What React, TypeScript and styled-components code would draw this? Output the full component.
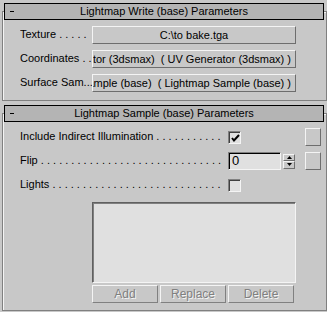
import styled, { createGlobalStyle } from "styled-components";

const GlobalStyle = createGlobalStyle`
  html, body {
    margin: 0;
    padding: 0;
    background: #c8c8c8;
  }
  body {
    font-family: "Liberation Sans", Arial, sans-serif;
    font-size: 11px;
    color: #000;
  }
`;

const dots = (n: number) => " .".repeat(n);

function App() {
  return (
    <>
      <GlobalStyle />
      <Page>
        <Rollout>
          <Header>
            <Dash />
            <Title>Lightmap Write (base) Parameters</Title>
          </Header>
          <Frame $pad="14px 0 8px 17px">
            <WriteGrid>
              <Label>
                <span>Texture</span>
                <Leader>{dots(5)}</Leader>
              </Label>
              <PushButton>
                <ButtonText>C:\to bake.tga</ButtonText>
              </PushButton>
              <Label>
                <span>Coordinates</span>
                <Leader>{dots(2)}</Leader>
              </Label>
              <PushButton>
                <ButtonText $clip>UV Generator (3dsmax)  ( UV Generator (3dsmax) )</ButtonText>
              </PushButton>
              <Label>
                <span>Surface Sam...</span>
              </Label>
              <PushButton>
                <ButtonText $clip>Lightmap Sample (base)  ( Lightmap Sample (base) )</ButtonText>
              </PushButton>
            </WriteGrid>
          </Frame>
        </Rollout>

        <Rollout $gap={4}>
          <Header>
            <Dash />
            <Title>Lightmap Sample (base) Parameters</Title>
          </Header>
          <Frame $pad="14px 0 7px 17px">
            <SampleGrid>
              <Label>
                <span>Include Indirect Illumination</span>
                <Leader>{dots(11)}</Leader>
              </Label>
              <Check>
                <svg width="9" height="8" viewBox="0 0 9 8">
                  <path d="M1 4 L3 6.5 L8 1" fill="none" stroke="#000" strokeWidth="2" />
                </svg>
              </Check>
              <SideButton />

              <Label>
                <span>Flip</span>
                <Leader>{dots(30)}</Leader>
              </Label>
              <SpinnerWrap>
                <Edit>0</Edit>
                <Spinner>
                  <SpinHalf>
                    <svg width="5" height="3" viewBox="0 0 5 3">
                      <path d="M2.5 0 L5 3 L0 3 Z" fill="#000" />
                    </svg>
                  </SpinHalf>
                  <SpinHalf>
                    <svg width="5" height="3" viewBox="0 0 5 3">
                      <path d="M0 0 L5 0 L2.5 3 Z" fill="#000" />
                    </svg>
                  </SpinHalf>
                </Spinner>
              </SpinnerWrap>
              <SideButton />

              <Label>
                <span>Lights</span>
                <Leader>{dots(28)}</Leader>
              </Label>
              <Check />
              <span />
            </SampleGrid>

            <ListArea>
              <ListBox />
              <ListButtons>
                <DisabledButton>Add</DisabledButton>
                <DisabledButton>Replace</DisabledButton>
                <DisabledButton>Delete</DisabledButton>
              </ListButtons>
            </ListArea>
          </Frame>
        </Rollout>
      </Page>
    </>
  );
}

export default App;

const Page = styled.div`
  box-sizing: border-box;
  width: 327px;
  height: 312px;
  overflow: hidden;
  padding: 3px 0 0 2px;
  display: flex;
  flex-direction: column;
`;

const Rollout = styled.section<{ $gap?: number }>`
  display: flex;
  flex-direction: column;
  width: 325px;
  margin-top: ${({ $gap }) => $gap ?? 0}px;
`;

const Header = styled.div`
  position: relative;
  z-index: 1;
  box-sizing: border-box;
  height: 17px;
  margin: 0 3px 0 2px;
  border: 1px solid #000;
  background: #b4b4b4;
  display: grid;
  grid-template-columns: 20px 1fr 20px;
  align-items: center;
`;

const Dash = styled.span`
  width: 4px;
  height: 1px;
  margin-left: 5px;
  background: #000;
`;

const Title = styled.span`
  text-align: center;
  white-space: nowrap;
  line-height: 15px;
`;

const Frame = styled.div<{ $pad: string }>`
  margin-top: -9px;
  border: 1px solid #808080;
  box-shadow: inset 1px 1px 0 #f4f4f4;
  padding: ${({ $pad }) => $pad};
`;

const WriteGrid = styled.div`
  display: grid;
  grid-template-columns: 72px 204px;
  grid-auto-rows: 18px;
  row-gap: 6px;
  align-items: center;
`;

const Label = styled.div`
  display: flex;
  align-items: center;
  min-width: 0;
  white-space: nowrap;
  overflow: hidden;
  padding-bottom: 2px;
`;

const Leader = styled.span`
  flex: 1;
  min-width: 0;
  overflow: hidden;
  white-space: pre;
`;

const PushButton = styled.div`
  box-sizing: border-box;
  height: 18px;
  border: 1px solid;
  border-color: #f4f4f4 #6e6e6e #6e6e6e #f4f4f4;
  background: #c8c8c8;
  display: flex;
  align-items: center;
  overflow: hidden;
`;

const ButtonText = styled.span<{ $clip?: boolean }>`
  flex: 1;
  display: flex;
  justify-content: ${({ $clip }) => ($clip ? "flex-end" : "center")};
  padding-right: ${({ $clip }) => ($clip ? "4px" : "0")};
  white-space: pre;
  overflow: hidden;
  line-height: 14px;
`;

const SampleGrid = styled.div`
  display: grid;
  grid-template-columns: 208px 77px 16px;
  grid-auto-rows: 18px;
  row-gap: 6px;
  align-items: center;
`;

const Check = styled.div`
  box-sizing: border-box;
  width: 13px;
  height: 13px;
  border: 1px solid;
  border-color: #808080 #f4f4f4 #f4f4f4 #808080;
  box-shadow: inset 1px 1px 0 #404040;
  background: #e0e0e0;
  display: flex;
  align-items: center;
  justify-content: center;
  padding: 1px 0 0 1px;
`;

const SideButton = styled.div`
  box-sizing: border-box;
  width: 16px;
  height: 18px;
  border: 1px solid;
  border-color: #f4f4f4 #6e6e6e #6e6e6e #f4f4f4;
  background: #c8c8c8;
`;

const SpinnerWrap = styled.div`
  display: flex;
  align-items: center;
  gap: 2px;
`;

const Edit = styled.div`
  box-sizing: border-box;
  width: 53px;
  height: 18px;
  border: 1px solid;
  border-color: #808080 #f4f4f4 #f4f4f4 #808080;
  box-shadow: inset 1px 1px 0 #000;
  background: #e0e0e0;
  font-size: 13px;
  line-height: 16px;
  padding-left: 3px;
`;

const Spinner = styled.div`
  box-sizing: border-box;
  width: 12px;
  height: 15px;
  display: flex;
  flex-direction: column;
`;

const SpinHalf = styled.div`
  flex: 1;
  box-sizing: border-box;
  border: 1px solid;
  border-color: #f4f4f4 #6e6e6e #6e6e6e #f4f4f4;
  display: flex;
  align-items: center;
  justify-content: center;
`;

const ListArea = styled.div`
  margin: 8px 0 0 72px;
  width: 204px;
  display: flex;
  flex-direction: column;
  gap: 2px;
`;

const ListBox = styled.div`
  box-sizing: border-box;
  height: 81px;
  border: 1px solid;
  border-color: #606060 #f4f4f4 #f4f4f4 #606060;
  box-shadow: inset 1px 1px 0 #808080;
  background: #e0e0e0;
`;

const ListButtons = styled.div`
  display: grid;
  grid-template-columns: repeat(3, 66px);
  gap: 2px;
`;

const DisabledButton = styled.div`
  box-sizing: border-box;
  height: 18px;
  border: 1px solid;
  border-color: #f4f4f4 #808080 #808080 #f4f4f4;
  color: #808080;
  text-shadow: 1px 1px 0 #f4f4f4;
  display: flex;
  align-items: center;
  justify-content: center;
  font-size: 12px;
`;
